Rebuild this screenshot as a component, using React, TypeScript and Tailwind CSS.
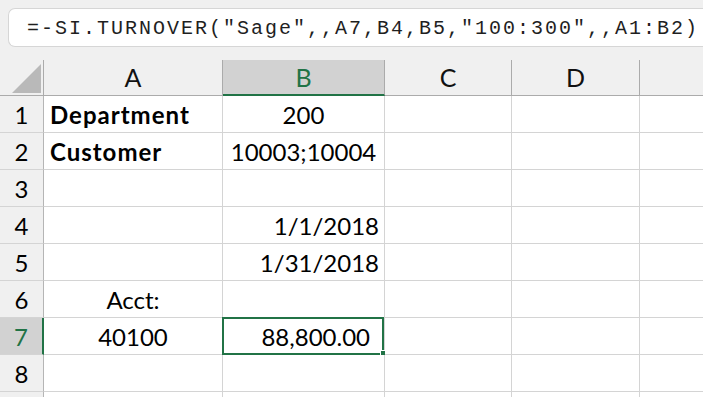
import React from 'react';

type Align = 'left' | 'center' | 'right';

type Cell = {
  text?: string;
  bold?: boolean;
  align?: Align;
  pr?: boolean;
};

// Sheet contents, rows 1..9 (A and B only; C, D, E are empty)
const rows: { a?: Cell; b?: Cell }[] = [
  { a: { text: 'Department', bold: true, align: 'left' }, b: { text: '200', align: 'center' } },
  { a: { text: 'Customer', bold: true, align: 'left' }, b: { text: '10003;10004', align: 'center' } },
  {},
  { b: { text: '1/1/2018', align: 'right' } },
  { b: { text: '1/31/2018', align: 'right' } },
  { a: { text: 'Acct:', align: 'center' } },
  { a: { text: '40100', align: 'center' }, b: { text: '88,800.00', align: 'right', pr: true } },
  {},
  {},
];

const alignClass: Record<Align, string> = {
  left: 'justify-start pl-[6px]',
  center: 'justify-center',
  right: 'justify-end pr-[5px]',
};

const font = "font-['Lato','Open_Sans',sans-serif]";

const DataCell: React.FC<{ cell?: Cell; selected?: boolean }> = ({ cell, selected }) => (
  <div className="relative flex h-[37px] items-center border-b border-r border-[#d4d4d4] bg-white pt-[2px]">
    {cell?.text && (
      <div
        className={`flex w-full ${alignClass[cell.align ?? 'left']} ${cell.pr ? 'pr-[14px]' : ''} ${
          cell.bold ? 'font-bold tracking-[1px]' : ''
        } text-[24px] leading-none text-black`}
      >
        {cell.text}
      </div>
    )}
    {selected && (
      <>
        <div className="absolute -left-[1px] -top-[1px] bottom-[-1px] right-0 border-2 border-[#217346]" />
        <div className="absolute -bottom-[3px] -right-[3px] h-[7px] w-[7px] border border-white bg-[#217346]" />
      </>
    )}
  </div>
);

export default function App() {
  return (
    <div className={`h-[397px] w-[703px] overflow-hidden bg-white ${font}`}>
      {/* Formula bar */}
      <div className="h-[60px] bg-[#f0f0f0] pl-[8px] pt-[8px]">
        <div className="flex h-[39px] items-center rounded-l-[7px] border border-r-0 border-[#d6d6d6] bg-white pl-[18px] pt-[3px] font-['Liberation_Mono',monospace] text-[20px] tracking-[2px] text-[#1f1f1f]">
          =-SI.TURNOVER("Sage",,A7,B4,B5,"100:300",,A1:B2)
        </div>
      </div>

      {/* Grid */}
      <div className="grid grid-cols-[44px_179px_162px_127px_128px_1fr]">
        {/* Column headers */}
        <div className="relative h-[36px] border-b border-r border-[#ababab] bg-[#f0f0f0]">
          <svg className="absolute bottom-[2px] right-[2px]" width="29" height="29" viewBox="0 0 29 29">
            <polygon points="29,0 29,29 0,29" fill="#b9b9b9" />
          </svg>
        </div>
        <div className="flex h-[36px] items-center justify-center border-b border-r border-[#ababab] bg-[#f0f0f0] pt-[1px] text-[25px] text-[#111]">
          A
        </div>
        <div className="flex h-[36px] items-center justify-center border-b-2 border-r border-b-[#217346] border-r-[#ababab] bg-[#d2d2d2] pt-[2px] text-[25px] text-[#217346]">
          B
        </div>
        <div className="flex h-[36px] items-center justify-center border-b border-r border-[#ababab] bg-[#f0f0f0] pt-[1px] text-[25px] text-[#111]">
          C
        </div>
        <div className="flex h-[36px] items-center justify-center border-b border-r border-[#ababab] bg-[#f0f0f0] pt-[1px] text-[25px] text-[#111]">
          D
        </div>
        <div className="h-[36px] border-b border-[#ababab] bg-[#f0f0f0]" />

        {rows.map((row, i) => {
          const isSel = i === 6;
          return (
            <React.Fragment key={i}>
              <div
                className={`flex h-[37px] items-center justify-center border-b border-[#d4d4d4] pt-[2px] text-[24px] ${
                  isSel
                    ? 'border-r-2 border-r-[#217346] bg-[#d2d2d2] text-[#217346]'
                    : 'border-r border-r-[#b5b5b5] bg-[#f0f0f0] text-black'
                }`}
              >
                {/* row 9 sits below the window edge; its number is not visible */}
                {i < 8 ? i + 1 : ''}
              </div>
              <DataCell cell={row.a} />
              <DataCell cell={row.b} selected={isSel} />
              <DataCell />
              <DataCell />
              <div className="h-[37px] border-b border-[#d4d4d4] bg-white" />
            </React.Fragment>
          );
        })}
      </div>
    </div>
  );
}
